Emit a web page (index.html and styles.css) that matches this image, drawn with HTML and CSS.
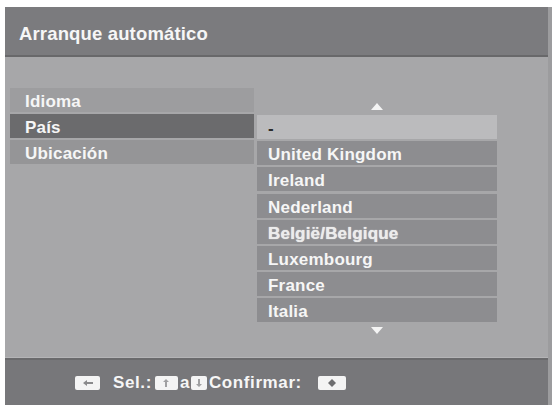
FILE: index.html
```html
<!DOCTYPE html>
<html lang="es">
<head>
<meta charset="utf-8">
<title>Arranque automático</title>
<link rel="stylesheet" href="styles.css">
</head>
<body>
<div class="panel">
  <div class="title">Arranque automático</div>
  <div class="content">
    <div class="menu">
      <div class="item item-idioma">Idioma</div>
      <div class="item item-sel">País</div>
      <div class="item item-ubic">Ubicación</div>
    </div>
    <div class="listcol">
      <div class="arrow-area"><span class="tri tri-up"></span></div>
      <div class="list">
        <div class="row row-cur">-</div>
        <div class="row">United Kingdom</div>
        <div class="row">Ireland</div>
        <div class="row">Nederland</div>
        <div class="row row-blur">België/Belgique</div>
        <div class="row">Luxembourg</div>
        <div class="row">France</div>
        <div class="row">Italia</div>
      </div>
      <div class="arrow-area arrow-down"><span class="tri tri-down"></span></div>
    </div>
  </div>
  <div class="footer">
    <span class="key key-left">
      <svg width="12" height="8" viewBox="0 0 12 8"><path d="M1 4 L5 1 V3 H11 V5 H5 V7 Z" fill="#8a8a8c"/></svg>
    </span>
    <span class="ftext">Sel.:</span>
    <span class="key key-ud">
      <svg width="8" height="10" viewBox="0 0 8 10"><path d="M4 1 L7 4 H5 V9 H3 V4 H1 Z" fill="#a0a0a2"/></svg>
    </span>
    <span class="ftext ftext-a">a</span>
    <span class="key key-ud2">
      <svg width="8" height="10" viewBox="0 0 8 10"><path d="M4 9 L7 6 H5 V1 H3 V6 H1 Z" fill="#a0a0a2"/></svg>
    </span>
    <span class="ftext ftext-conf">Confirmar:</span>
    <span class="key key-ok">
      <svg width="10" height="10" viewBox="0 0 10 10"><path d="M5 1 L9 5 L5 9 L1 5 Z" fill="#6e6e70"/></svg>
    </span>
  </div>
</div>
</body>
</html>
```

FILE: styles.css
```css
html, body {
  margin: 0;
  padding: 0;
  background: #ffffff;
}

body {
  font-family: "Liberation Sans", Arial, sans-serif;
  font-weight: bold;
  color: #f6f6f6;
}

.panel {
  margin: 7px 1px 0 5px;
  width: 547px;
  height: 398px;
  display: flex;
  flex-direction: column;
  background: #a7a7a9;
  border-right: 4px solid #9c9c9e;
  box-sizing: border-box;
}

.title {
  height: 50px;
  box-sizing: border-box;
  background: #7b7b7e;
  border-bottom: 2px solid #68686a;
  padding: 16px 0 0 14px;
  font-size: 18.5px;
  letter-spacing: 0.15px;
  line-height: 21px;
}

.content {
  flex: 1;
  display: flex;
  gap: 3px;
  padding: 31px 0 0 5px;
  border-bottom: 1px solid #b4b4b6;
}

.menu {
  width: 244px;
  display: flex;
  flex-direction: column;
  gap: 2px;
}

.item {
  height: 24px;
  box-sizing: border-box;
  padding: 3px 0 0 15px;
  font-size: 17px;
  letter-spacing: 0.2px;
  line-height: 21px;
}

.item-idioma { background: #9d9d9f; }
.item-sel { background: #6b6b6d; }
.item-ubic { background: #959597; }

.listcol {
  width: 240px;
  display: flex;
  flex-direction: column;
}

.arrow-area {
  height: 27px;
  display: flex;
  justify-content: center;
  align-items: flex-start;
  padding-top: 15px;
  box-sizing: border-box;
}

.arrow-down {
  padding-top: 5px;
}

.tri {
  width: 0;
  height: 0;
  border-left: 6px solid transparent;
  border-right: 6px solid transparent;
}

.tri-up { border-bottom: 7px solid #f4f4f4; }
.tri-down { border-top: 7px solid #f4f4f4; }

.list {
  display: flex;
  flex-direction: column;
  gap: 2.2px;
}

.row {
  height: 24px;
  box-sizing: border-box;
  background: #8d8d90;
  padding: 3px 0 0 11px;
  font-size: 17px;
  letter-spacing: 0.2px;
  line-height: 21px;
}

.row-cur {
  background: #bbbbbd;
  color: #2a2a2a;
}

.row-blur {
  color: #ececec;
  text-shadow: 0 0 1px #f0f0f0;
}

.footer {
  height: 47px;
  border-top: 2px solid #6a6a6c;
  background: #77777a;
  display: flex;
  align-items: center;
  padding: 0 0 0 70px;
  font-size: 17px;
  letter-spacing: 0.6px;
  box-sizing: border-box;
}

.key {
  height: 14px;
  background: #f4f4f4;
  border-radius: 2px;
  display: flex;
  align-items: center;
  justify-content: center;
}

.key-left { width: 25px; margin-right: 13px; }
.key-ud { width: 23px; margin-left: 3px; }
.key-ud2 { width: 16px; }
.key-ok { width: 28px; margin-left: 16px; }

.ftext { line-height: 17px; }
.ftext-a { margin: 0 1px 0 2px; }
.ftext-conf { margin-left: 2px; }
```
